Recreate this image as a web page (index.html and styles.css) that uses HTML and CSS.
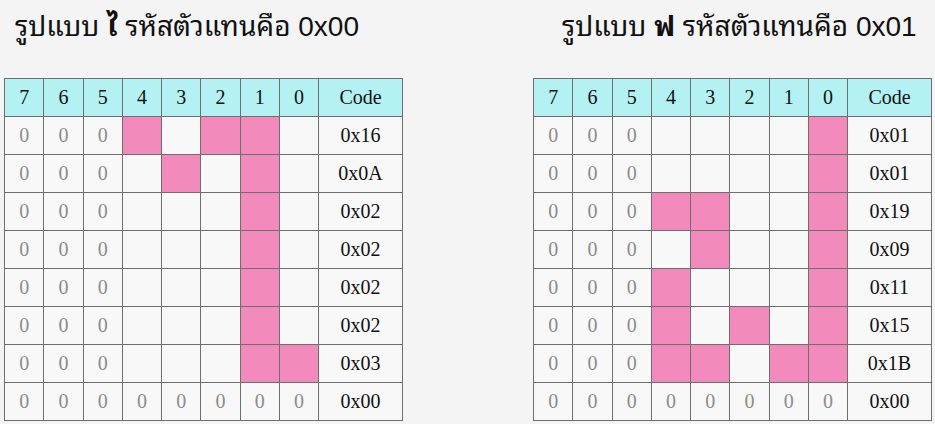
FILE: index.html
```html
<!DOCTYPE html>
<html lang="th">
<head>
    <meta charset="UTF-8">
    <meta name="viewport" content="width=device-width, initial-scale=1.0">
    <title>Thai LCD font patterns</title>
    <link rel="stylesheet" href="styles.css">
</head>
<body>
    <div class="sheet">
        <div class="pattern pattern-left">
            <h2 class="title">รูปแบบ <b>ไ</b> รหัสตัวแทนคือ 0x00</h2>
            <table class="bits" id="tableSaraAi"></table>
        </div>
        <div class="pattern pattern-right">
            <h2 class="title">รูปแบบ <b>ฟ</b> รหัสตัวแทนคือ 0x01</h2>
            <table class="bits" id="tableFoFan"></table>
        </div>
    </div>
    <script>
        // one byte per row, only the lower 5 bits are drawn
        const saraAi = [0x16, 0x0A, 0x02, 0x02, 0x02, 0x02, 0x03, 0x00];
        const foFan = [0x01, 0x01, 0x19, 0x09, 0x11, 0x15, 0x1B, 0x00];

        function hex(n) {
            return '0x' + n.toString(16).toUpperCase().padStart(2, '0');
        }

        function buildTable(id, rows) {
            const table = document.getElementById(id);
            let html = '<tr>';
            for (let b = 7; b >= 0; b--) {
                html += `<th>${b}</th>`;
            }
            html += '<th class="code">Code</th></tr>';

            rows.forEach((value, i) => {
                const last = i === rows.length - 1;
                html += '<tr>';
                for (let b = 7; b >= 0; b--) {
                    if (b > 4 || last) {
                        html += '<td class="zero">0</td>';
                    } else if (value & (1 << b)) {
                        html += '<td class="on"></td>';
                    } else {
                        html += '<td></td>';
                    }
                }
                html += `<td class="code">${hex(value)}</td></tr>`;
            });
            table.innerHTML = html;
        }

        buildTable('tableSaraAi', saraAi);
        buildTable('tableFoFan', foFan);
    </script>
</body>
</html>
```

FILE: styles.css
```css
body {
    margin: 0;
    padding: 0;
    background: #f4f4f4;
    font-family: "Liberation Sans", "Noto Sans Thai Looped", "Loma", "Garuda", "Tlwg Typo", Arial, sans-serif;
}

.sheet {
    display: flex;
    justify-content: space-between;
    padding: 0 3px 0 4px;
}

.pattern {
    width: 399px;
}

.title {
    margin: 0 0 34px 0;
    padding-top: 10px;
    height: 34px;
    line-height: 34px;
    font-size: 28px;
    font-weight: normal;
    color: #111;
    white-space: nowrap;
}

.pattern-left .title {
    padding-left: 11px;
}

.pattern-right .title {
    padding-left: 29px;
}

.title b {
    font-weight: bold;
}

.bits {
    width: 399px;
    border-collapse: collapse;
    table-layout: fixed;
    font-family: "Liberation Serif", "Times New Roman", serif;
    font-size: 20px;
}

.bits th,
.bits td {
    height: 37px;
    padding: 0;
    border: 1px solid #6e6e6e;
    text-align: center;
    vertical-align: middle;
    background: #f8f8f8;
    color: #111;
}

.bits th {
    background: #b3f1f2;
    font-weight: normal;
}

.bits th.code {
    width: 83px;
}

.bits td.zero {
    color: #8c8c8c;
}

.bits td.on {
    background: #f28abb;
}
```
